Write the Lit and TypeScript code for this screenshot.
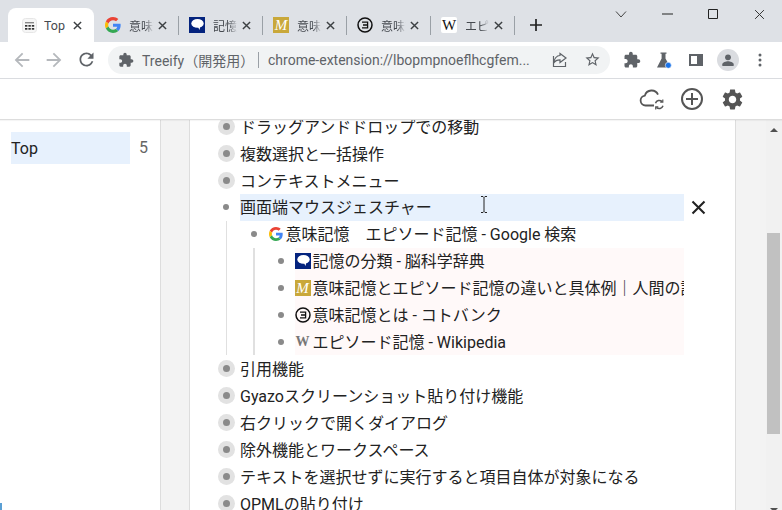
import { LitElement, html, css, svg } from "lit";
import { customElement } from "lit/decorators.js";

const paths = {
  back: "M20 11H7.83l5.59-5.59L12 4l-8 8 8 8 1.41-1.41L7.83 13H20v-2z",
  forward: "M4 11h12.17l-5.59-5.59L12 4l8 8-8 8-1.41-1.41L16.17 13H4v-2z",
  reload:
    "M17.65 6.35C16.2 4.9 14.21 4 12 4c-4.42 0-7.99 3.58-7.99 8s3.57 8 7.99 8c3.73 0 6.84-2.55 7.73-6h-2.08c-.82 2.33-3.04 4-5.65 4-3.31 0-6-2.69-6-6s2.69-6 6-6c1.66 0 3.14.69 4.22 1.78L13 11h7V4l-2.35 2.35z",
  puzzle:
    "M20.5 11H19V7c0-1.1-.9-2-2-2h-4V3.5C13 2.12 11.88 1 10.5 1S8 2.12 8 3.5V5H4c-1.1 0-1.99.9-1.99 2v3.8H3.5c1.49 0 2.7 1.21 2.7 2.7s-1.21 2.7-2.7 2.7H2V20c0 1.1.9 2 2 2h3.8v-1.5c0-1.49 1.21-2.7 2.7-2.7 1.49 0 2.7 1.21 2.7 2.7V22H17c1.1 0 2-.9 2-2v-4h1.5c1.38 0 2.5-1.12 2.5-2.5S21.88 11 20.5 11z",
  star: "M22 9.24l-7.19-.62L12 2 9.19 8.63 2 9.24l5.46 4.73L5.82 21 12 17.27 18.18 21l-1.63-7.03L22 9.24zM12 15.4l-3.76 2.27 1-4.28-3.32-2.88 4.38-.38L12 6.1l1.71 4.04 4.38.38-3.32 2.88 1 4.28L12 15.4z",
  gear: "M19.14 12.94c.04-.3.06-.61.06-.94 0-.32-.02-.64-.07-.94l2.03-1.58c.18-.14.23-.41.12-.61l-1.92-3.32c-.12-.22-.37-.29-.59-.22l-2.39.96c-.5-.38-1.03-.7-1.62-.94l-.36-2.54c-.04-.24-.24-.41-.48-.41h-3.84c-.24 0-.43.17-.47.41l-.36 2.54c-.59.24-1.13.57-1.62.94l-2.39-.96c-.22-.08-.47 0-.59.22L2.74 8.87c-.12.21-.08.47.12.61l2.03 1.58c-.05.3-.09.63-.09.94s.02.64.07.94l-2.03 1.58c-.18.14-.23.41-.12.61l1.92 3.32c.12.22.37.29.59.22l2.39-.96c.5.38 1.03.7 1.62.94l.36 2.54c.05.24.24.41.48.41h3.84c.24 0 .44-.17.47-.41l.36-2.54c.59-.24 1.13-.56 1.62-.94l2.39.96c.22.08.47 0 .59-.22l1.92-3.32c.12-.22.07-.47-.12-.61l-2.01-1.58zM12 15.6c-1.98 0-3.6-1.62-3.6-3.6s1.62-3.6 3.6-3.6 3.6 1.62 3.6 3.6-1.62 3.6-3.6 3.6z",
};

const icon = (d: string, size: number, fill: string) => html`<svg
  width=${size}
  height=${size}
  viewBox="0 0 24 24"
  fill=${fill}
>
  <path d=${d}></path>
</svg>`;

const closeX = (size: number, color: string, sw = 1.6) => html`<svg
  width=${size}
  height=${size}
  viewBox="0 0 10 10"
  fill="none"
  stroke=${color}
  stroke-width=${sw}
>
  <path d="M1 1l8 8M9 1l-8 8"></path>
</svg>`;

const googleG = (size: number) => html`<svg width=${size} height=${size} viewBox="0 0 48 48">
  <path fill="#EA4335" d="M24 9.5c3.54 0 6.71 1.22 9.21 3.6l6.85-6.85C35.9 2.38 30.47 0 24 0 14.62 0 6.51 5.38 2.56 13.22l7.98 6.19C12.43 13.72 17.74 9.5 24 9.5z"></path>
  <path fill="#4285F4" d="M46.98 24.55c0-1.57-.15-3.09-.38-4.55H24v9.02h12.94c-.58 2.96-2.26 5.48-4.78 7.18l7.73 6c4.51-4.18 7.09-10.36 7.09-17.65z"></path>
  <path fill="#FBBC05" d="M10.53 28.59c-.48-1.45-.76-2.99-.76-4.59s.27-3.14.76-4.59l-7.98-6.19C.92 16.46 0 20.12 0 24c0 3.88.92 7.54 2.56 10.78l7.97-6.19z"></path>
  <path fill="#34A853" d="M24 48c6.48 0 11.93-2.13 15.89-5.81l-7.73-6c-2.15 1.45-4.92 2.3-8.16 2.3-6.26 0-11.57-4.22-13.47-9.91l-7.98 6.19C6.51 42.62 14.62 48 24 48z"></path>
</svg>`;

const brainIcon = html`<svg width="16" height="16" viewBox="0 0 16 16">
  <rect width="16" height="16" fill="#04237e"></rect>
  <ellipse cx="8.5" cy="6.4" rx="6.2" ry="4.4" fill="#fff"></ellipse>
  <path d="M9 10l1.5 3 .8-3.6z" fill="#fff"></path>
</svg>`;

const kotobankIcon = html`<svg width="16" height="16" viewBox="0 0 16 16" fill="none" stroke="#111">
  <circle cx="8" cy="8" r="7" stroke-width="1.5"></circle>
  <path d="M5 5.2h5.6v5.6H5M6 8h4.6" stroke-width="1.3"></path>
</svg>`;

const topIcon = html`<svg width="15" height="15" viewBox="0 0 15 15">
  <rect x=".5" y=".5" width="14" height="14" rx="3" fill="#f6f6f6" stroke="#e6e6e6"></rect>
  <path d="M3 4h9v1.4H3z" fill="#888"></path>
  ${[3, 6.4, 9.8].map(
    (x) => svg`<rect x=${x} y="7" width="2.4" height="1.7" fill="#333"></rect>
      <rect x=${x} y="10" width="2.4" height="1.7" fill="#333"></rect>`
  )}
</svg>`;

type Fav = "g" | "brain" | "m" | "koto" | "w";

const favicon = (kind: Fav, small = false) => {
  switch (kind) {
    case "g":
      return googleG(small ? 14 : 16);
    case "brain":
      return brainIcon;
    case "koto":
      return kotobankIcon;
    case "m":
      return html`<span class="fav-m">M</span>`;
    case "w":
      return html`<span class="fav-w">W</span>`;
  }
};

const tabs: { fav: Fav; title: string }[] = [
  { fav: "g", title: "意味記憶" },
  { fav: "brain", title: "記憶の分類" },
  { fav: "m", title: "意味記憶と" },
  { fav: "koto", title: "意味記憶" },
  { fav: "w", title: "エピソード" },
];

interface TreeNode {
  text: string;
  fav?: Fav;
  collapsed?: boolean;
  focused?: boolean;
  tinted?: boolean;
  children?: TreeNode[];
}

const tree: TreeNode[] = [
  { text: "ドラッグアンドドロップでの移動", collapsed: true },
  { text: "複数選択と一括操作", collapsed: true },
  { text: "コンテキストメニュー", collapsed: true },
  {
    text: "画面端マウスジェスチャー",
    focused: true,
    children: [
      {
        text: "意味記憶　エピソード記憶 - Google 検索",
        fav: "g",
        children: [
          { text: "記憶の分類 - 脳科学辞典", fav: "brain", tinted: true },
          { text: "意味記憶とエピソード記憶の違いと具体例｜人間の記憶", fav: "m", tinted: true },
          { text: "意味記憶とは - コトバンク", fav: "koto", tinted: true },
          { text: "エピソード記憶 - Wikipedia", fav: "w", tinted: true },
        ],
      },
    ],
  },
  { text: "引用機能", collapsed: true },
  { text: "Gyazoスクリーンショット貼り付け機能", collapsed: true },
  { text: "右クリックで開くダイアログ", collapsed: true },
  { text: "除外機能とワークスペース", collapsed: true },
  { text: "テキストを選択せずに実行すると項目自体が対象になる", collapsed: true },
  { text: "OPMLの貼り付け", collapsed: true },
];

@customElement("app-root")
export class AppRoot extends LitElement {
  static styles = css`
    :host {
      display: block;
      position: relative;
      width: 782px;
      height: 510px;
      overflow: hidden;
      background: #fff;
      font-family: Roboto, "Noto Sans CJK JP", sans-serif;
      color: #222;
    }
    svg {
      display: block;
      flex: none;
    }

    /* browser chrome */
    .tabstrip {
      height: 42px;
      box-sizing: border-box;
      padding: 8px 0 0 8px;
      background: #dee1e6;
      display: flex;
      align-items: stretch;
    }
    .tab {
      position: relative;
      width: 84px;
      box-sizing: border-box;
      display: flex;
      align-items: center;
      padding: 0 11.5px 0 11px;
      font-size: 12px;
      color: #45494f;
    }
    .tab.active {
      width: 86px;
      background: #fff;
      border-radius: 8px 8px 0 0;
      padding: 0 12px 0 13px;
      font-size: 12.5px;
    }
    .tab.active .tab-title {
      margin-left: 7px;
      -webkit-mask-image: none;
      mask-image: none;
    }
    .tab:not(.active):not(.first)::before,
    .newtab::before {
      content: "";
      position: absolute;
      left: 0;
      top: 8px;
      height: 19px;
      width: 1px;
      background: #9aa0a6;
    }
    .tab-fav {
      width: 16px;
      height: 16px;
      flex: none;
      display: flex;
      align-items: center;
      justify-content: center;
    }
    .tab-fav .fav-w {
      display: block;
      width: 16px;
      background: #fff;
      border-radius: 2px;
      text-align: center;
      font-weight: 400;
      font-size: 15px;
      color: #111;
    }
    .tab-title {
      flex: 1;
      margin-left: 8px;
      margin-right: 4px;
      overflow: hidden;
      white-space: nowrap;
      -webkit-mask-image: linear-gradient(90deg, #000 60%, transparent 100%);
      mask-image: linear-gradient(90deg, #000 60%, transparent 100%);
    }
    .newtab {
      position: relative;
      width: 44px;
      display: flex;
      align-items: center;
      justify-content: center;
      font-size: 0;
    }
    .win {
      margin-left: auto;
      display: flex;
      margin-top: -8px;
      height: 28px;
      align-items: center;
    }
    .win > div {
      width: 46px;
      display: flex;
      justify-content: center;
    }

    .toolbar {
      height: 37px;
      box-sizing: border-box;
      border-bottom: 1px solid #dadce0;
      background: #fff;
      display: flex;
      align-items: center;
      padding: 0 6px 1px 6px;
    }
    .nav {
      width: 32px;
      display: flex;
      justify-content: center;
    }
    .omnibox {
      width: 502px;
      height: 28px;
      margin: 0 6px;
      box-sizing: border-box;
      border-radius: 14px;
      background: #f1f3f4;
      display: flex;
      align-items: center;
      padding-left: 10px;
      font-size: 14px;
      color: #5f6368;
      white-space: nowrap;
    }
    .omni-name {
      margin-left: 8px;
      width: 104px;
    }
    .omni-sep {
      width: 1px;
      height: 16px;
      background: #9aa0a6;
      margin: 0 9px 0 12px;
    }
    .omni-url {
      width: 264px;
      overflow: hidden;
    }
    .omni-actions {
      margin-left: auto;
      display: flex;
      padding-right: 2px;
    }
    .omni-actions > div {
      width: 32px;
      display: flex;
      justify-content: center;
    }
    .ext {
      width: 32px;
      display: flex;
      justify-content: center;
    }
    .avatar {
      width: 22px;
      height: 22px;
      border-radius: 50%;
      background: #dadce0;
      display: flex;
      align-items: center;
      justify-content: center;
    }

    /* app */
    .appbar {
      height: 41px;
      box-sizing: border-box;
      border-bottom: 1px solid #ddd;
      display: flex;
      justify-content: flex-end;
      align-items: center;
      padding: 0 30px 0 0;
      position: relative;
      z-index: 1;
      background: #fff;
      box-shadow: 0 1px 1px rgba(0, 0, 0, 0.04);
    }
    .appbar > div {
      width: 40px;
      display: flex;
      justify-content: center;
    }
    .main {
      height: 390px;
      display: grid;
      grid-template-columns: 160px 30px 545px 31px 16px;
      overflow: hidden;
    }
    .left {
      box-sizing: border-box;
      padding: 12px 5px 0 11px;
      display: flex;
      align-items: flex-start;
      font-size: 16px;
    }
    .left-item {
      flex: 1;
      height: 32px;
      box-sizing: border-box;
      padding-top: 1px;
      line-height: 32px;
      background: #e7f1fd;
      color: #222;
    }
    .left-count {
      width: 16px;
      margin-left: 9px;
      height: 32px;
      line-height: 32px;
      color: #666;
    }
    .gutter {
      background: #f3f3f3;
      border-left: 1px solid #ddd;
      border-right: 1px solid #ddd;
    }
    .gutter.right {
      border-right: none;
    }
    .scrollbar {
      background: #f1f1f1;
      position: relative;
      display: flex;
      flex-direction: column;
      align-items: center;
      justify-content: space-between;
      padding: 8px 0 5px;
      box-sizing: border-box;
    }
    .arrow-up,
    .arrow-down {
      width: 0;
      height: 0;
      border-left: 4px solid transparent;
      border-right: 4px solid transparent;
    }
    .arrow-up {
      border-bottom: 4px solid #505050;
    }
    .arrow-down {
      border-top: 4px solid #505050;
    }
    .thumb {
      position: absolute;
      left: 1px;
      right: 2px;
      top: 113px;
      height: 201px;
      background: #c1c1c1;
    }

    /* tree */
    .tree {
      box-sizing: border-box;
      padding: 0 51px 0 22.5px;
      margin-top: -7px;
      font-size: 16px;
    }
    .row {
      display: flex;
      height: 26.93px;
      position: relative;
    }
    .bullet {
      width: 27px;
      flex: none;
      display: flex;
      align-items: center;
      justify-content: center;
      margin-right: 0.5px;
    }
    .dot {
      width: 6px;
      height: 6px;
      border-radius: 50%;
      background: #8a8a8a;
    }
    .collapsed .bullet-ring {
      width: 17px;
      height: 17px;
      border-radius: 50%;
      background: #e2e2e2;
      display: flex;
      align-items: center;
      justify-content: center;
    }
    .collapsed .dot {
      width: 7px;
      height: 7px;
    }
    .content {
      flex: 1;
      min-width: 0;
      display: flex;
      align-items: center;
      white-space: nowrap;
      overflow: hidden;
    }
    .content.focused {
      background: #e7f1fd;
    }
    .content.tinted {
      background: #fff9f9;
      margin-left: -0.5px;
    }
    .text {
      display: block;
      line-height: 20px;
      padding-top: 2.5px;
    }
    .fav {
      width: 16px;
      height: 16px;
      margin-right: 2px;
      flex: none;
      display: flex;
      align-items: center;
      justify-content: center;
    }
    .fav-m {
      width: 16px;
      height: 16px;
      background: #c9a83a;
      color: #fff;
      font: italic 15px/16px "Liberation Serif", serif;
      text-align: center;
      display: block;
    }
    .fav-w {
      font: bold 14px/16px "Liberation Serif", serif;
      color: #777;
    }
    .children {
      position: relative;
      padding-left: 27.5px;
    }
    .children::before {
      content: "";
      position: absolute;
      left: 13px;
      top: 0;
      bottom: 0;
      width: 1.5px;
      background: #e0e0e0;
    }
    .remove {
      position: absolute;
      right: -22px;
      top: 6px;
    }
    .ibeam {
      position: absolute;
      left: 480px;
      top: 196px;
      z-index: 2;
    }
    .corner {
      position: absolute;
      left: 0;
      bottom: 0;
      width: 2px;
      height: 7px;
      background: #5a9fd4;
    }
  `;

  renderNode(n: TreeNode): unknown {
    const rowClass = n.collapsed ? "row collapsed" : "row";
    const contentClass = `content${n.focused ? " focused" : ""}${n.tinted ? " tinted" : ""}`;
    return html`<div class="node">
      <div class=${rowClass}>
        <div class="bullet">
          ${n.collapsed
            ? html`<div class="bullet-ring"><div class="dot"></div></div>`
            : html`<div class="dot"></div>`}
        </div>
        <div class=${contentClass}>
          ${n.fav ? html`<span class="fav">${favicon(n.fav, true)}</span>` : null}
          <span class="text">${n.text}</span>
        </div>
        ${n.focused ? html`<div class="remove">${closeX(15, "#222", 1.4)}</div>` : null}
      </div>
      ${n.children
        ? html`<div class="children">${n.children.map((c) => this.renderNode(c))}</div>`
        : null}
    </div>`;
  }

  render() {
    return html`
      <div class="tabstrip">
        <div class="tab active">
          <span class="tab-fav">${topIcon}</span>
          <span class="tab-title">Top</span>
          ${closeX(9, "#3c4043")}
        </div>
        ${tabs.map(
          (t, i) => html`<div class="tab ${i === 0 ? "first" : ""}">
            <span class="tab-fav">${favicon(t.fav)}</span>
            <span class="tab-title">${t.title}</span>
            ${closeX(9, "#3c4043")}
          </div>`
        )}
        <div class="newtab">
          <svg width="12" height="12" viewBox="0 0 12 12" stroke="#222" stroke-width="1.7">
            <path d="M6 0v12M0 6h12"></path>
          </svg>
        </div>
        <div class="win">
          <div>
            <svg width="12" height="7" viewBox="0 0 12 7" fill="none" stroke="#444" stroke-width="1">
              <path d="M1 .5l5 5.5 5-5.5"></path>
            </svg>
          </div>
          <div>
            <svg width="11" height="2" viewBox="0 0 11 2"><path d="M0 .5h11v1H0z" fill="#222"></path></svg>
          </div>
          <div>
            <svg width="10" height="10" viewBox="0 0 10 10" fill="none" stroke="#222">
              <path d="M.5.5h9v9h-9z"></path>
            </svg>
          </div>
          <div>${closeX(11, "#333", 0.9)}</div>
        </div>
      </div>

      <div class="toolbar">
        <div class="nav">${icon(paths.back, 22, "#b5b8bc")}</div>
        <div class="nav">${icon(paths.forward, 22, "#b5b8bc")}</div>
        <div class="nav">${icon(paths.reload, 21, "#5f6368")}</div>
        <div class="omnibox">
          ${icon(paths.puzzle, 16, "#5f6368")}
          <span class="omni-name">Treeify（開発用）</span>
          <span class="omni-sep"></span>
          <span class="omni-url">chrome-extension://lbopmpnoeflhcgfem...</span>
          <div class="omni-actions">
            <div>
              <svg width="18" height="18" viewBox="0 0 18 18" fill="none" stroke="#5f6368" stroke-width="1.2">
                <path d="M9 3.5v-1l6 4.5-6 4.5V8.8c-3 0-5 1-6.3 3.2C3 8 5.5 4.5 9 4.5z"></path>
                <path d="M2.5 5v10.5h12V11"></path>
              </svg>
            </div>
            <div>${icon(paths.star, 17, "#5f6368")}</div>
          </div>
        </div>
        <div class="ext">${icon(paths.puzzle, 18, "#5f6368")}</div>
        <div class="ext">
          <svg width="18" height="18" viewBox="0 0 18 18">
            <path d="M5.5 1.5h6v1.2h-1v4.8L15.5 16.5H2L6.6 7.5V2.7H5.5z" fill="#5f6368"></path>
            <circle cx="13.3" cy="14.3" r="3" fill="#1a73e8" stroke="#fff" stroke-width=".6"></circle>
          </svg>
        </div>
        <div class="ext">
          <svg width="14" height="12" viewBox="0 0 14 12">
            <path d="M0 0h14v12H0z" fill="#5f6368"></path>
            <path d="M2 2h6v8H2z" fill="#fff"></path>
          </svg>
        </div>
        <div class="ext">
          <div class="avatar">
            <svg width="16" height="16" viewBox="0 0 24 24" fill="#5f6368">
              <circle cx="12" cy="8" r="4.4"></circle>
              <path d="M3.5 21v-2.5c0-3 5.6-4.6 8.5-4.6s8.5 1.6 8.5 4.6V21z"></path>
            </svg>
          </div>
        </div>
        <div class="ext">
          <svg width="4" height="14" viewBox="0 0 4 14" fill="#5f6368">
            <circle cx="2" cy="2" r="1.5"></circle>
            <circle cx="2" cy="7" r="1.5"></circle>
            <circle cx="2" cy="12" r="1.5"></circle>
          </svg>
        </div>
      </div>

      <div class="appbar">
        <div>
          <svg width="28" height="28" viewBox="0 0 28 28" fill="none" stroke="#555" stroke-width="1.8">
            <path d="M16 20.5H7.5a5 5 0 0 1-.6-9.95A7 7 0 0 1 20 9.6"></path>
            <path d="M17.5 18.2a4 4 0 0 1 6.6-1.6M25 20.8a4 4 0 0 1-6.6 1.6" stroke-width="1.5"></path>
            <path d="M24.8 14.6v2.6h-2.6M17.7 24.4v-2.6h2.6" stroke-width="1.2"></path>
          </svg>
        </div>
        <div>
          <svg width="28" height="28" viewBox="0 0 28 28" fill="none" stroke="#555" stroke-width="2">
            <circle cx="14" cy="14" r="10"></circle>
            <path d="M14 8v12M8 14h12"></path>
          </svg>
        </div>
        <div>
          <svg width="25" height="25" viewBox="0 0 24 24" fill="#555"><path d=${paths.gear}></path></svg>
        </div>
      </div>

      <div class="main">
        <div class="left">
          <div class="left-item">Top</div>
          <div class="left-count">5</div>
        </div>
        <div class="gutter"></div>
        <div class="tree">${tree.map((n) => this.renderNode(n))}</div>
        <div class="gutter right"></div>
        <div class="scrollbar">
          <div class="arrow-up"></div>
          <div class="thumb"></div>
          <div class="arrow-down"></div>
        </div>
      </div>

      <svg class="ibeam" width="8" height="17" viewBox="0 0 8 17" fill="none" stroke="#222" stroke-width="1">
        <path d="M1 .5h2l1 1 1-1h2M4 1.5v14M1 16.5h2l1-1 1 1h2"></path>
      </svg>
      <div class="corner"></div>
    `;
  }
}
